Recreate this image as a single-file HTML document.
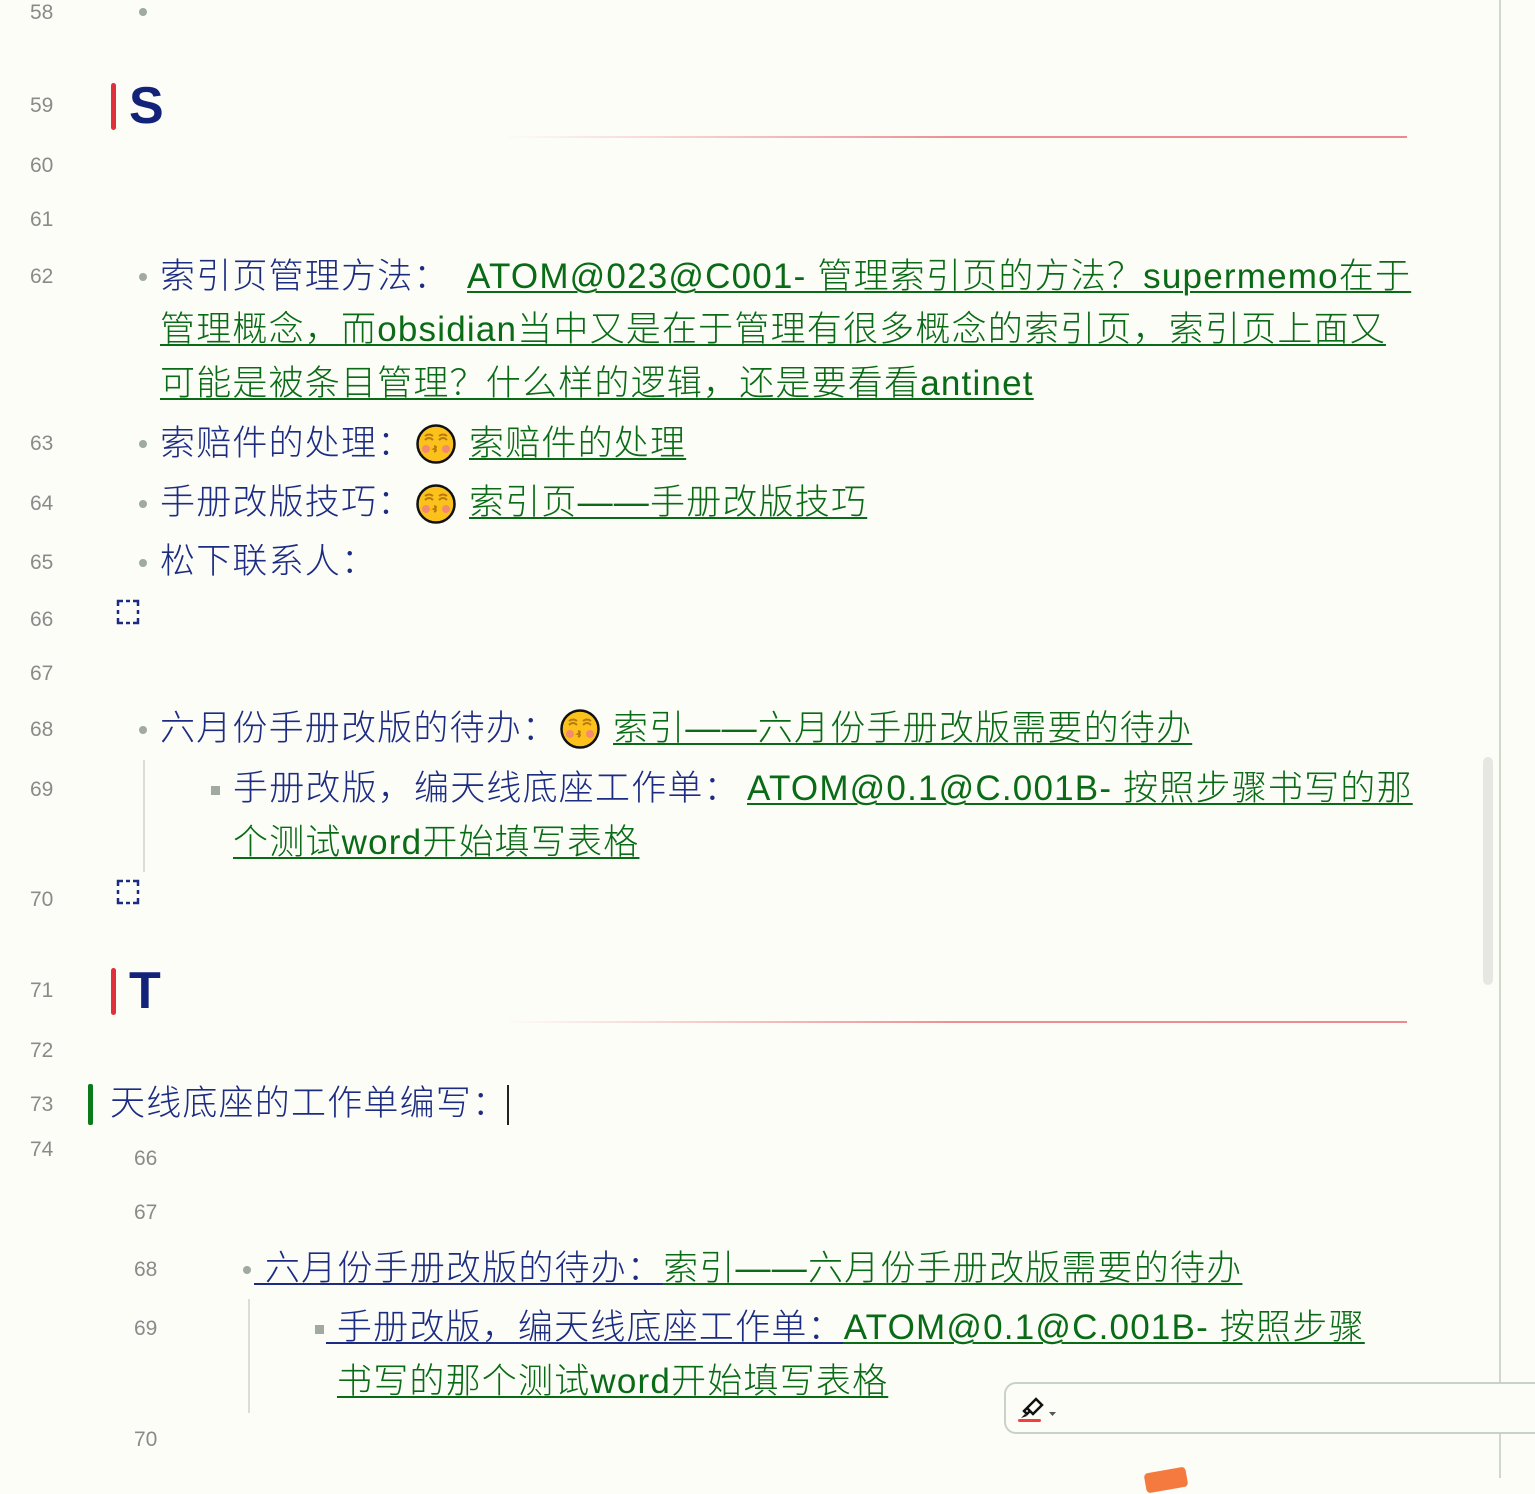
<!DOCTYPE html>
<html><head><meta charset="utf-8"><style>
body{margin:0;width:1535px;height:1478px;background:#fdfdf8;position:relative;overflow:hidden;font-family:"Liberation Sans","Noto Sans CJK SC",sans-serif;}
.n{position:absolute;left:30px;font-size:21px;color:#8a8a8a;line-height:24px;}
.t{position:absolute;font-size:35px;letter-spacing:1.2px;font-weight:300;line-height:54px;color:#1c2c82;white-space:nowrap;}
.l{color:#0a6b16;text-decoration:underline;text-decoration-thickness:2px;text-underline-offset:3px;}
.b{position:absolute;width:8px;height:8px;border-radius:50%;background:#a0aaa0;}
.sq{position:absolute;width:9px;height:9px;background:#a0aaa0;}
.h{position:absolute;font-size:52px;font-weight:bold;color:#13237a;line-height:60px;}
.rb{position:absolute;width:5px;height:47px;background:#e0303a;border-radius:3px;}
.gl{position:absolute;height:2px;background:linear-gradient(to right,rgba(232,130,135,0),#ec9095 50%,#eb8a90);}
.em{position:absolute;width:40px;height:40px;}
.blk{position:absolute;width:24px;height:28px;}
</style></head><body>
<div style="position:absolute;left:1499px;top:0;width:2px;height:1478px;background:#d0d8cc"></div>
<div style="position:absolute;left:1483px;top:757px;width:10px;height:228px;background:#e6e6e2;border-radius:5px"></div>

<div class="n" style="top:1px">58</div><div class="b" style="left:139px;top:8px"></div>
<div class="n" style="top:94px">59</div><div class="rb" style="left:111px;top:83px"></div><div class="h" style="left:129px;top:76px">S</div>
<div class="gl" style="left:500px;top:136px;width:907px"></div>
<div class="n" style="top:154px">60</div>
<div class="n" style="top:208px">61</div>
<div class="n" style="top:265px">62</div><div class="b" style="left:139px;top:273px"></div>
<div class="t" style="left:160px;top:250px">索引页管理方法：</div>
<div class="t" style="left:467px;top:250px"><span class="l">ATOM@023@C001- 管理索引页的方法？supermemo在于</span></div>
<div class="t" style="left:160px;top:303px"><span class="l">管理概念，而obsidian当中又是在于管理有很多概念的索引页，索引页上面又</span></div>
<div class="t" style="left:160px;top:357px"><span class="l">可能是被条目管理？什么样的逻辑，还是要看看antinet</span></div>

<svg width="0" height="0" style="position:absolute"><defs><g id="e"><circle cx="20" cy="20" r="18.5" fill="#fcc21b" stroke="#111" stroke-width="2.5"/><path d="M9 16q4-4 8 0M23 16q4-4 8 0M9 12q4-3 8 0M23 12q4-3 8 0" stroke="#b87a10" stroke-width="2" fill="none"/><circle cx="10" cy="25" r="4" fill="#f58a73"/><circle cx="30" cy="25" r="4" fill="#f58a73"/><path d="M18 22q4 1 0 3q4 1 0 3" stroke="#b87a10" stroke-width="2" fill="none"/></g>
<g id="k"><path d="M2 8V3h5M10 3h4M17 3h5v5M22 12v4M2 12v4M2 20v5h5M10 25h4M17 25h5v-5" stroke="#1c2c82" stroke-width="2.5" fill="none"/></g></defs></svg>

<div class="n" style="top:432px">63</div><div class="b" style="left:139px;top:440px"></div>
<div class="t" style="left:160px;top:417px">索赔件的处理：</div><svg class="em" style="left:416px;top:424px"><use href="#e"/></svg>
<div class="t" style="left:469px;top:417px"><span class="l">索赔件的处理</span></div>
<div class="n" style="top:492px">64</div><div class="b" style="left:139px;top:500px"></div>
<div class="t" style="left:160px;top:476px">手册改版技巧：</div><svg class="em" style="left:416px;top:484px"><use href="#e"/></svg>
<div class="t" style="left:469px;top:476px"><span class="l">索引页——手册改版技巧</span></div>
<div class="n" style="top:551px">65</div><div class="b" style="left:139px;top:559px"></div>
<div class="t" style="left:160px;top:535px">松下联系人：</div>
<div class="n" style="top:608px">66</div><svg class="blk" style="left:116px;top:598px"><use href="#k"/></svg>
<div class="n" style="top:662px">67</div>
<div class="n" style="top:718px">68</div><div class="b" style="left:139px;top:726px"></div>
<div class="t" style="left:160px;top:702px">六月份手册改版的待办：</div><svg class="em" style="left:560px;top:709px"><use href="#e"/></svg>
<div class="t" style="left:613px;top:702px"><span class="l">索引——六月份手册改版需要的待办</span></div>
<div style="position:absolute;left:143px;top:760px;width:2px;height:112px;background:#dcdcd8"></div>
<div class="n" style="top:778px">69</div><div class="sq" style="left:211px;top:786px"></div>
<div class="t" style="left:233px;top:762px">手册改版，编天线底座工作单：</div>
<div class="t" style="left:747px;top:762px"><span class="l">ATOM@0.1@C.001B- 按照步骤书写的那</span></div>
<div class="t" style="left:233px;top:816px"><span class="l">个测试word开始填写表格</span></div>
<div class="n" style="top:888px">70</div><svg class="blk" style="left:116px;top:878px"><use href="#k"/></svg>
<div class="n" style="top:979px">71</div><div class="rb" style="left:111px;top:968px"></div><div class="h" style="left:129px;top:961px">T</div>
<div class="gl" style="left:500px;top:1021px;width:907px"></div>
<div class="n" style="top:1039px">72</div>
<div class="n" style="top:1093px">73</div><div style="position:absolute;left:88px;top:1084px;width:5px;height:41px;background:#0a7a1a;border-radius:2px"></div>
<div class="t" style="left:110px;top:1077px">天线底座的工作单编写：</div><div style="position:absolute;left:507px;top:1085px;width:2px;height:40px;background:#222"></div>
<div class="n" style="top:1138px">74</div>

<div class="n" style="left:134px;top:1147px">66</div>
<div class="n" style="left:134px;top:1201px">67</div>
<div class="n" style="left:134px;top:1258px">68</div><div class="b" style="left:243px;top:1266px"></div>
<div class="t" style="left:254px;top:1242px;color:#1c2c82;text-decoration:underline;text-decoration-thickness:2px;text-underline-offset:3px">&nbsp;六月份手册改版的待办：<span class="l">索引——六月份手册改版需要的待办</span></div>
<div style="position:absolute;left:248px;top:1299px;width:2px;height:114px;background:#dcdcd8"></div>
<div class="n" style="left:134px;top:1317px">69</div><div class="sq" style="left:315px;top:1325px"></div>
<div class="t" style="left:326px;top:1301px;text-decoration:underline;text-decoration-thickness:2px;text-underline-offset:3px">&nbsp;手册改版，编天线底座工作单：<span class="l">ATOM@0.1@C.001B- 按照步骤</span></div>
<div class="t" style="left:337px;top:1355px"><span class="l">书写的那个测试word开始填写表格</span></div>
<div class="n" style="left:134px;top:1428px">70</div>

<div style="position:absolute;left:1004px;top:1382px;width:560px;height:48px;border:2px solid #c8d2c6;border-radius:12px;background:#fdfdf8"></div>
<svg style="position:absolute;left:1015px;top:1390px" width="50" height="34"><path d="M12 18l9-9 6 6-9 9z M12 18l-3 3 3 3 3-3" stroke="#111" stroke-width="2.5" fill="none"/><path d="M6 28l4-4 2 2z" fill="#111"/><rect x="3" y="29" width="23" height="3" rx="1.5" fill="#f04040"/><path d="M34 22h7l-3.5 4z" fill="#555"/></svg>
<div style="position:absolute;left:1145px;top:1470px;width:42px;height:20px;background:#f47a40;border-radius:4px;transform:rotate(-10deg)"></div>
</body></html>
